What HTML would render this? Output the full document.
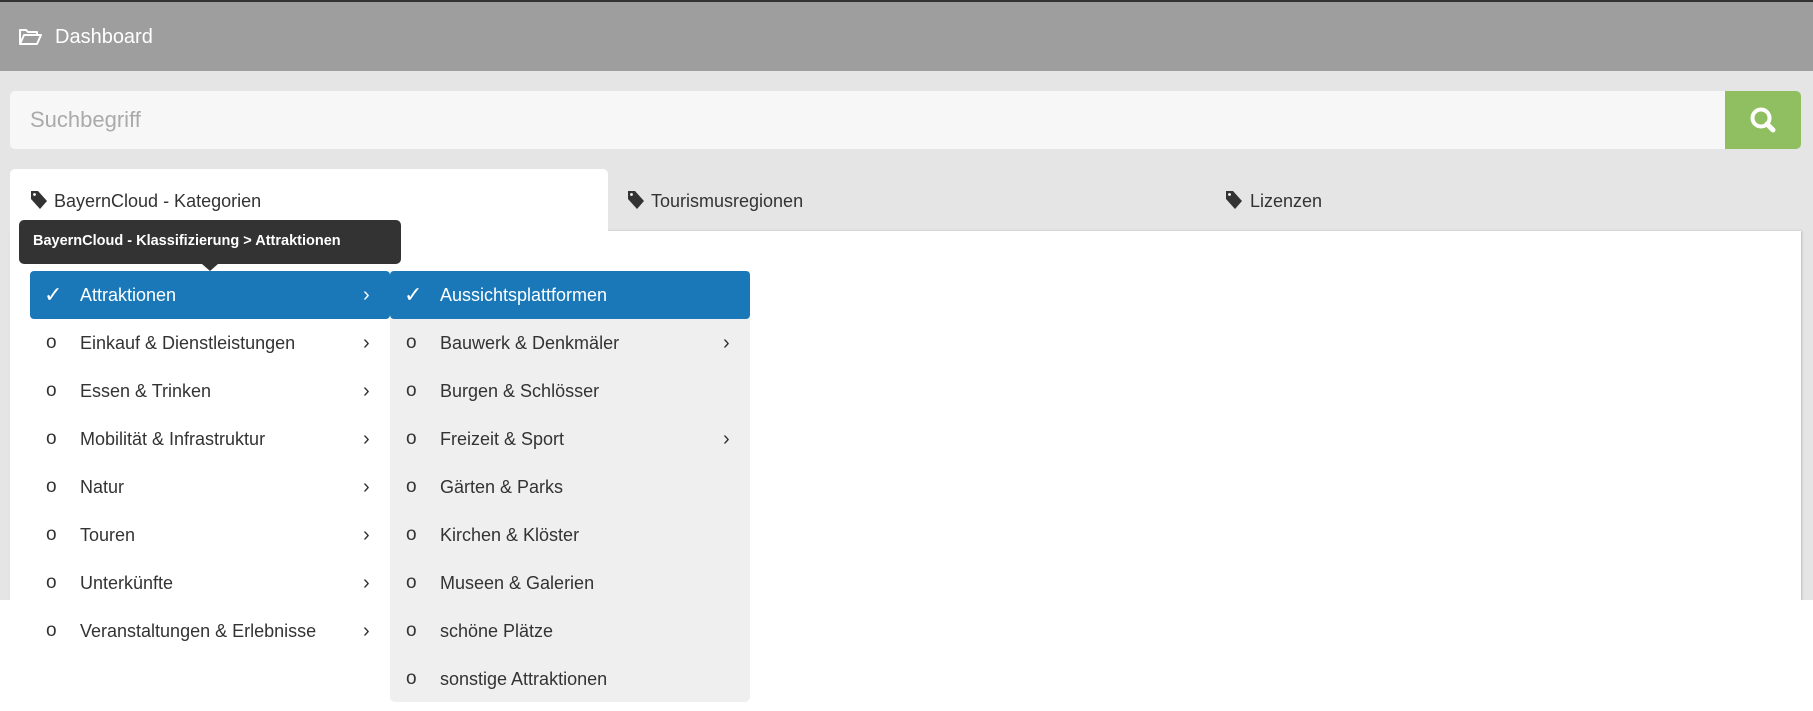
<!DOCTYPE html>
<html><head><meta charset="utf-8"><style>
*{box-sizing:border-box;margin:0;padding:0}
body{width:1813px;height:711px;overflow:hidden;background:#e5e5e5;font-family:"Liberation Sans",sans-serif;position:relative}
.abs{position:absolute}
.top{left:0;top:0;width:1813px;height:71px;background:#9e9e9e;border-top:2px solid #333}
.dash{left:55px;top:26px;color:#fff;font-size:20px}
.search{left:10px;top:91px;width:1715px;height:58px;background:#f7f7f7;border-radius:5px 0 0 5px}
.ph{left:30px;top:107px;color:#aaa;font-size:22px}
.btn{left:1725px;top:91px;width:76px;height:58px;background:#8fbf60;border-radius:0 5px 5px 0}
.tab{top:169px;height:62px;font-size:18px;color:#333;padding:22px 0 0 0}
.panel{left:10px;top:231px;width:1791px;height:370px;background:#fff;box-shadow:1px 0 2px #bbb}
.low{left:0;top:600px;width:1813px;height:111px;background:#fff}
.tip{left:19px;top:220px;width:382px;height:44px;background:#333;border-radius:5px;color:#fff;font-weight:bold;font-size:14.5px;padding:13px 0 0 14px;white-space:nowrap}
.arrow{left:202px;top:264px;width:0;height:0;border-left:8px solid transparent;border-right:8px solid transparent;border-top:7px solid #333}
.row{height:48px;width:360px;font-size:18px;color:#333;line-height:48px;white-space:nowrap}
.row .m{position:absolute;left:16px;font-size:19px}
.sel .m{font-size:22px;left:14px}
.row .t{position:absolute;left:50px}
.row .c{position:absolute;left:333px;font-size:20px}
.sel{background:#1a78b9;color:#fff;border-radius:4px}
.rmenu{left:390px;top:271px;width:360px;height:431px;background:#efefef;border-radius:0 0 5px 5px}
</style></head><body>
<div class="abs top"></div>
<svg class="abs" style="left:18px;top:27px" width="25" height="20" viewBox="0 0 25 20"><path d="M2 17V3h6l2 2h9v3M2 17l4-9h17l-4 9z" fill="none" stroke="#fff" stroke-width="2" stroke-linejoin="round"/></svg>
<div class="abs dash">Dashboard</div>
<div class="abs search"></div>
<div class="abs ph">Suchbegriff</div>
<div class="abs btn"></div>
<svg class="abs" style="left:1748px;top:105px" width="30" height="30" viewBox="0 0 30 30"><circle cx="13" cy="13" r="8.5" fill="none" stroke="#fff" stroke-width="4"/><path d="M19 19l6 6" stroke="#fff" stroke-width="5" stroke-linecap="round"/></svg>
<div class="abs panel"></div>
<div class="abs low"></div>
<div class="abs" style="left:10px;top:169px;width:598px;height:62px;background:#fff;border-radius:5px 5px 0 0"></div>
<svg class="abs" style="left:30px;top:190px" width="18" height="20" viewBox="0 0 18 20"><path d="M1 1h7l9 10-7 8-9-10z" fill="#333"/><circle cx="4.5" cy="4.5" r="1.4" fill="#fff"/></svg>
<div class="abs tab" style="left:54px">BayernCloud - Kategorien</div>
<svg class="abs" style="left:627px;top:190px" width="18" height="20" viewBox="0 0 18 20"><path d="M1 1h7l9 10-7 8-9-10z" fill="#333"/><circle cx="4.5" cy="4.5" r="1.4" fill="#fff"/></svg>
<div class="abs tab" style="left:651px">Tourismusregionen</div>
<svg class="abs" style="left:1225px;top:190px" width="18" height="20" viewBox="0 0 18 20"><path d="M1 1h7l9 10-7 8-9-10z" fill="#333"/><circle cx="4.5" cy="4.5" r="1.4" fill="#fff"/></svg>
<div class="abs tab" style="left:1250px">Lizenzen</div>
<div class="abs tip">BayernCloud - Klassifizierung &gt; Attraktionen</div>
<div class="abs arrow"></div>
<div class="abs rmenu"></div>

<div class="abs row sel" style="left:30px;top:271px"><span class="m">✓</span><span class="t">Attraktionen</span><span class="c">›</span></div>
<div class="abs row" style="left:30px;top:319px"><span class="m">o</span><span class="t">Einkauf &amp; Dienstleistungen</span><span class="c">›</span></div>
<div class="abs row" style="left:30px;top:367px"><span class="m">o</span><span class="t">Essen &amp; Trinken</span><span class="c">›</span></div>
<div class="abs row" style="left:30px;top:415px"><span class="m">o</span><span class="t">Mobilität &amp; Infrastruktur</span><span class="c">›</span></div>
<div class="abs row" style="left:30px;top:463px"><span class="m">o</span><span class="t">Natur</span><span class="c">›</span></div>
<div class="abs row" style="left:30px;top:511px"><span class="m">o</span><span class="t">Touren</span><span class="c">›</span></div>
<div class="abs row" style="left:30px;top:559px"><span class="m">o</span><span class="t">Unterkünfte</span><span class="c">›</span></div>
<div class="abs row" style="left:30px;top:607px"><span class="m">o</span><span class="t">Veranstaltungen &amp; Erlebnisse</span><span class="c">›</span></div>

<div class="abs row sel" style="left:390px;top:271px"><span class="m">✓</span><span class="t">Aussichtsplattformen</span></div>
<div class="abs row" style="left:390px;top:319px"><span class="m">o</span><span class="t">Bauwerk &amp; Denkmäler</span><span class="c">›</span></div>
<div class="abs row" style="left:390px;top:367px"><span class="m">o</span><span class="t">Burgen &amp; Schlösser</span></div>
<div class="abs row" style="left:390px;top:415px"><span class="m">o</span><span class="t">Freizeit &amp; Sport</span><span class="c">›</span></div>
<div class="abs row" style="left:390px;top:463px"><span class="m">o</span><span class="t">Gärten &amp; Parks</span></div>
<div class="abs row" style="left:390px;top:511px"><span class="m">o</span><span class="t">Kirchen &amp; Klöster</span></div>
<div class="abs row" style="left:390px;top:559px"><span class="m">o</span><span class="t">Museen &amp; Galerien</span></div>
<div class="abs row" style="left:390px;top:607px"><span class="m">o</span><span class="t">schöne Plätze</span></div>
<div class="abs row" style="left:390px;top:655px"><span class="m">o</span><span class="t">sonstige Attraktionen</span></div>
</body></html>
